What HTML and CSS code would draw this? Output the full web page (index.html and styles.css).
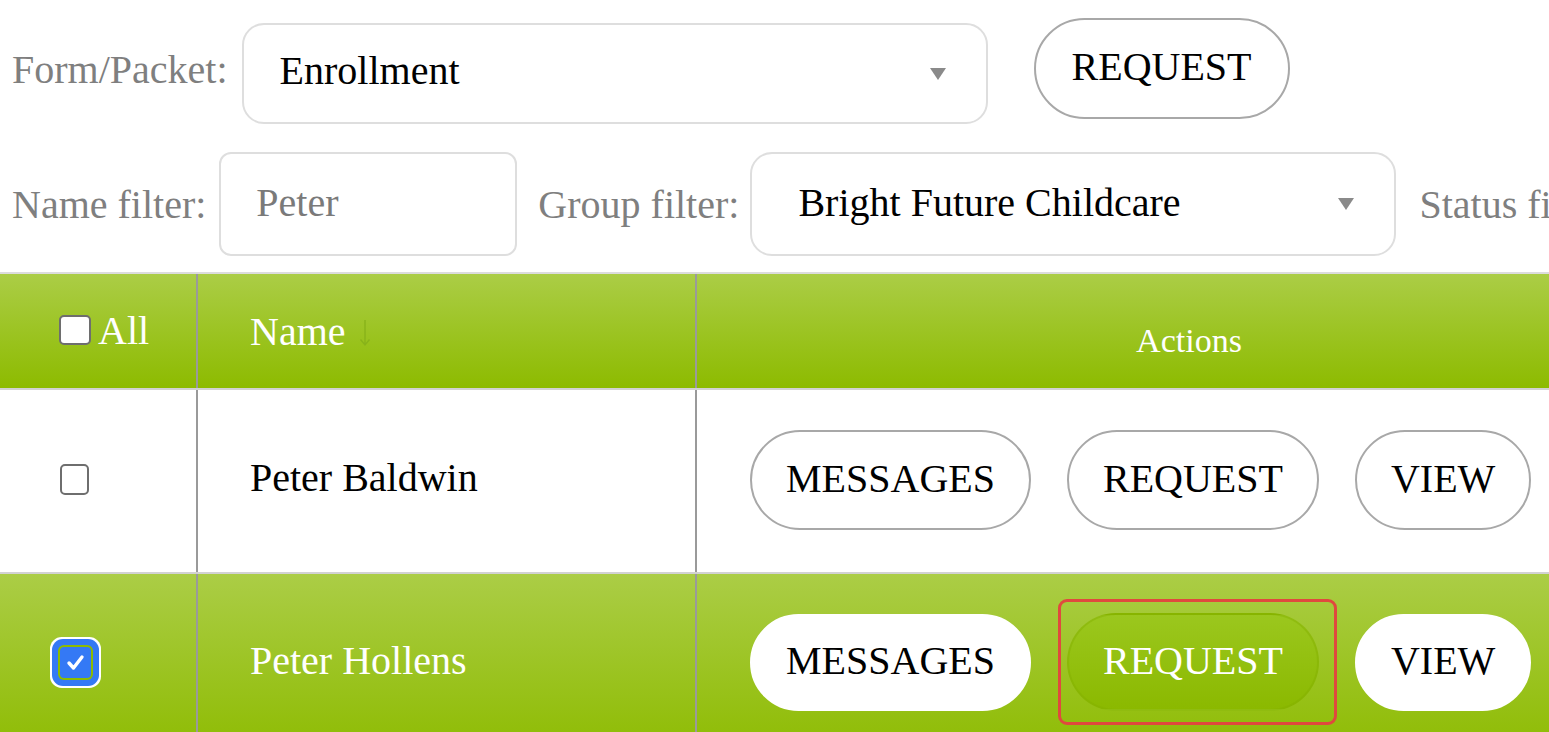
FILE: index.html
```html
<!DOCTYPE html>
<html>
<head>
<meta charset="utf-8">
<link rel="stylesheet" href="styles.css">
</head>
<body>
<div class="page">
  <div class="toolbar toolbar-form">
    <span class="lbl lbl-form">Form/Packet:</span>
    <div class="select select-form"><span class="sel-text">Enrollment</span><span class="caret"></span></div>
    <button class="pill pill-top">REQUEST</button>
  </div>
  <div class="toolbar toolbar-filter">
    <span class="lbl">Name filter:</span>
    <div class="input"><span class="placeholder">Peter</span></div>
    <span class="lbl lbl-group">Group filter:</span>
    <div class="select select-group"><span class="sel-text">Bright Future Childcare</span><span class="caret"></span></div>
    <span class="lbl lbl-status">Status filter:</span>
  </div>
  <div class="grid">
    <div class="trow thead">
      <div class="cell c1"><span class="cb"></span><span class="all">All</span></div>
      <div class="cell c2"><span>Name</span><svg class="sort" width="14" height="30" viewBox="0 0 14 30"><path d="M7 2 V27 M2.5 21.5 L7 27 L11.5 21.5" fill="none" stroke="#88b31a" stroke-width="1.4"/></svg></div>
      <div class="cell c3 actions-head">Actions</div>
    </div>
    <div class="trow tbody">
      <div class="cell c1"><span class="cb cb-row"></span></div>
      <div class="cell c2 name">Peter Baldwin</div>
      <div class="cell c3 btns">
        <button class="pill">MESSAGES</button>
        <button class="pill">REQUEST</button>
        <button class="pill">VIEW</button>
      </div>
    </div>
    <div class="trow tbody selected">
      <div class="cell c1"><span class="cb cb-checked"><svg width="31" height="31" viewBox="0 0 31 31"><path d="M9 16 L13.5 21 L22 10" fill="none" stroke="#fff" stroke-width="3.4" stroke-linecap="round" stroke-linejoin="round"/></svg></span></div>
      <div class="cell c2 name">Peter Hollens</div>
      <div class="cell c3 btns">
        <button class="pill pill-white">MESSAGES</button>
        <span class="hl"><button class="pill pill-green">REQUEST</button></span>
        <button class="pill pill-white">VIEW</button>
      </div>
    </div>
  </div>
</div>
</body>
</html>
```

FILE: styles.css
```css
* { box-sizing: border-box; }
html, body { margin: 0; padding: 0; background: #fff; }
body {
  width: 1549px;
  height: 732px;
  overflow: hidden;
  font-family: "Liberation Serif", "Times New Roman", serif;
  font-size: 40px;
  color: #000;
}
.page { width: 1700px; }

.toolbar { display: flex; white-space: nowrap; }
.toolbar-form { align-items: flex-start; padding: 18px 0 0 12px; height: 124px; }
.toolbar-filter { align-items: center; padding-left: 12px; margin-top: 28px; height: 104px; }

.lbl { color: #7f7f7f; flex-shrink: 0; }
.lbl-form { margin-top: 5px; height: 101px; line-height: 93px; }
.lbl-group { margin-left: 21px; }
.lbl-status { margin-left: 23px; }

.select {
  flex-shrink: 0;
  display: flex;
  align-items: center;
  border: 2px solid #dedede;
  border-radius: 22px;
  background: #fff;
}
.select-form { width: 746px; height: 101px; margin-left: 14px; margin-top: 5px; padding-left: 36px; padding-bottom: 6px; }
.select-group { width: 646px; height: 104px; margin-left: 11px; padding-left: 46px; padding-bottom: 4px; }
.caret {
  margin-left: auto;
  width: 0; height: 0;
  border-left: 8px solid transparent;
  border-right: 8px solid transparent;
  border-top: 12px solid #8a8a8a;
}
.select-form .caret { margin-right: 40px; margin-top: 6px; }
.select-group .caret { margin-right: 40px; margin-top: 4px; }

.input {
  flex-shrink: 0;
  width: 298px;
  height: 104px;
  margin-left: 13px;
  border: 2px solid #dedede;
  border-radius: 12px;
  display: flex;
  align-items: center;
  padding-left: 35px;
  padding-bottom: 4px;
}
.placeholder { color: #7a7a7a; }

.pill {
  font-family: "Liberation Serif", "Times New Roman", serif;
  font-size: 40px;
  color: #000;
  background: #fff;
  border: 2px solid #a8a8a8;
  border-radius: 52px;
  height: 100px;
  padding: 0 34px 3px;
  flex-shrink: 0;
  cursor: pointer;
}
.pill-top { height: 101px; margin-left: 46px; padding: 0 36px 5px; }

.grid { margin-top: 16px; border-top: 2px solid #dcdcdc; width: 1681px; }
.trow { display: grid; grid-template-columns: 198px 499px 984px; }
.cell { display: flex; align-items: center; }
.c1, .c2 { border-right: 2px solid #9a9a9a; }
.thead { height: 116px; border-bottom: 2px solid #d2d2d2; background: linear-gradient(#abcd46, #8dbb00); color: #fff; }
.thead .c1 { padding-left: 59px; padding-bottom: 2px; }
.c2 { padding-left: 52px; }
.sort { margin-left: 12px; margin-top: 4px; }
.actions-head { justify-content: center; font-size: 34px; padding-top: 20px; }
.all { margin-left: 7px; }

.cb {
  display: inline-block;
  width: 32px;
  height: 30px;
  background: #fff;
  border: 2px solid #6e6e6e;
  border-radius: 5px;
  flex-shrink: 0;
}
.tbody { height: 184px; border-bottom: 2px solid #d2d2d2; }
.tbody .c1 { padding-left: 60px; padding-bottom: 4px; }
.tbody .name { padding-bottom: 7px; }
.cb-row { width: 29px; height: 31px; }
.cb-checked {
  width: 31px;
  height: 31px;
  border: none;
  border-radius: 4px;
  background: #3479f5;
  box-shadow: 0 0 0 2px #8dbb00, 0 0 0 8px #3479f5, 0 0 0 10px #fff;
  display: flex;
}
.btns { padding-left: 53px; gap: 36px; padding-bottom: 2px; }

.selected { background: linear-gradient(#abcd46, #8dbb00); color: #fff; border-bottom: none; }
.selected .cell { padding-bottom: 8px; }
.selected .name { padding-bottom: 12px; }
.selected .c1 { padding-bottom: 8px; }
.pill-white { border-color: #fff; height: 97px; }
.pill-green {
  height: 98px;
  color: #fff;
  background: linear-gradient(#9bc71e, #8bb900);
  border: 2px solid rgba(130, 175, 0, 0.45);
}
.hl { position: relative; display: inline-flex; }
.hl::after {
  content: "";
  position: absolute;
  left: -9px;
  right: -18px;
  top: -14px;
  bottom: -14px;
  border: 3px solid #e0493e;
  border-radius: 9px;
  pointer-events: none;
}
```
